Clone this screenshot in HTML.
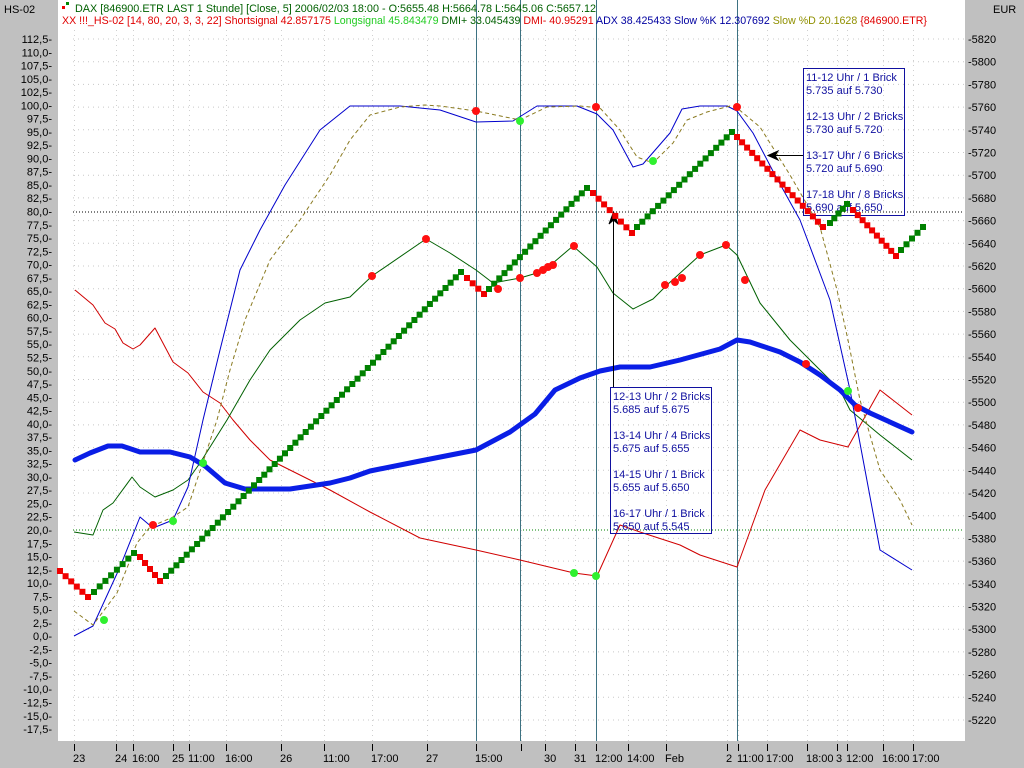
<!DOCTYPE html>
<html><head><meta charset="utf-8"><style>
html,body{margin:0;padding:0;background:#c0c0c0;}
svg{display:block;font-family:"Liberation Sans",sans-serif;}
</style></head><body>
<svg id="s" width="1024" height="768" viewBox="0 0 1024 768" xmlns="http://www.w3.org/2000/svg">
<rect x="0" y="0" width="1024" height="768" fill="#c0c0c0"/>
<rect x="58" y="0" width="907" height="741" fill="#ffffff"/>
<g id="grid"></g>
<line x1="73" y1="212" x2="964" y2="212" stroke="#000" stroke-dasharray="1,2"/>
<line x1="73" y1="530" x2="964" y2="530" stroke="#008000" stroke-dasharray="1,2"/>
<g stroke="#3d7282" stroke-width="1">
<line x1="476.5" y1="0" x2="476.5" y2="741"/><line x1="520.5" y1="0" x2="520.5" y2="741"/>
<line x1="596.5" y1="0" x2="596.5" y2="741"/><line x1="737.5" y1="0" x2="737.5" y2="741"/>
</g>
<g font-size="11" fill="#000" id="axes"></g>
<text x="4" y="13" font-size="11">HS-02</text>
<text x="993" y="13" font-size="11">EUR</text>
<rect x="62" y="6" width="3" height="3" fill="#e00"/><rect x="66" y="2" width="3" height="3" fill="#080"/>
<text x="75" y="12" font-size="11" fill="#006000" textLength="521" lengthAdjust="spacingAndGlyphs">DAX [846900.ETR LAST 1 Stunde] [Close, 5] 2006/02/03 18:00 - O:5655.48 H:5664.78 L:5645.06 C:5657.12</text>
<text y="24" font-size="11" textLength="865" lengthAdjust="spacingAndGlyphs" x="62"><tspan fill="#e00000">XX !!!_HS-02 [14, 80, 20, 3, 3, 22] Shortsignal 42.857175 </tspan><tspan fill="#22cc22">Longsignal 45.843479 </tspan><tspan fill="#006000">DMI+ 33.045439 </tspan><tspan fill="#e00000">DMI- 40.95291 </tspan><tspan fill="#0000a0">ADX 38.425433 Slow %K 12.307692 </tspan><tspan fill="#909000">Slow %D 20.1628 </tspan><tspan fill="#e00000">{846900.ETR}</tspan></text>
<g fill="none" stroke-linejoin="round">
<polyline stroke="#d00000" points="75,290 93,305 105,323 115,329 123,343 133,349 140,345 155,328 173,362 188,373 203,392 220,403 233,420 250,440 270,460 300,475 330,490 370,512 420,538 476,550 520,560 574,573 597,576 620,525 640,532 680,545 700,555 737,567 765,490 800,430 820,440 848,447 880,390 912,415"/>
<polyline stroke="#006000" points="74,532 93,535 103,510 113,503 132,477 140,487 155,497 173,490 188,480 200,463 227,420 250,380 270,350 300,320 325,303 350,297 372,276 426,239 450,253 476,270 493,283 520,278 537,273 553,263 573,246 597,267 613,293 633,309 653,299 667,285 700,255 726,245 737,255 760,303 790,340 820,370 840,390 850,410 880,435 912,460"/>
<polyline stroke="#0000cc" points="74,636 93,626 120,567 140,517 153,528 173,520 188,487 203,420 220,350 240,270 260,230 285,185 320,130 350,106 400,106 440,110 476,122 513,121 537,106 577,106 597,114 613,130 633,167 643,164 670,133 682,109 700,106 727,106 737,111 753,133 775,175 800,220 830,300 850,390 865,470 880,550 912,570"/>
<polyline stroke="#8a7a20" stroke-dasharray="4,3" points="74,611 93,625 117,593 137,543 150,527 173,517 188,507 217,420 230,370 245,320 270,260 300,220 330,175 350,140 370,115 400,107 425,105 440,106 476,111 520,120 547,107 580,106 600,108 620,130 637,157 653,163 673,143 687,120 707,112 730,106 737,108 760,127 790,175 820,227 837,290 848,340 860,400 880,470 900,500 912,525"/>
<polyline stroke="#0a1ee6" stroke-width="5" stroke-linecap="round" points="75,460 90,453 108,446 122,446 140,452 170,452 190,457 205,466 225,483 245,489 290,489 330,483 350,478 370,471 420,461 476,450 510,432 535,414 555,390 580,378 600,371 620,367 650,367 680,360 720,349 737,340 750,342 780,352 800,362 820,375 840,390 855,405 870,413 912,432"/>
</g>
<g fill="none" stroke="#1010a0">
<rect x="803.5" y="68.5" width="101" height="147"/>
<rect x="610.5" y="387.5" width="101" height="146"/>
</g>
<g stroke="#000" fill="#000">
<line x1="803" y1="155.5" x2="770" y2="155.5"/><path d="M768,155.5 L778,151 L775,155.5 L778,160 Z"/>
<line x1="613.5" y1="387" x2="613.5" y2="216"/><path d="M613.5,212 L609,224 L613.5,220 L618,224 Z"/>
</g>
<g font-size="11" fill="#1010a0">
<text x="806" y="81">11-12 Uhr / 1 Brick</text><text x="806" y="94">5.735 auf 5.730</text>
<text x="806" y="120">12-13 Uhr / 2 Bricks</text><text x="806" y="133">5.730 auf 5.720</text>
<text x="806" y="159">13-17 Uhr / 6 Bricks</text><text x="806" y="172">5.720 auf 5.690</text>
<text x="806" y="198">17-18 Uhr / 8 Bricks</text><text x="806" y="211">5.690 auf 5.650</text>
<text x="613" y="400">12-13 Uhr / 2 Bricks</text><text x="613" y="413">5.685 auf 5.675</text>
<text x="613" y="439">13-14 Uhr / 4 Bricks</text><text x="613" y="452">5.675 auf 5.655</text>
<text x="613" y="478">14-15 Uhr / 1 Brick</text><text x="613" y="491">5.655 auf 5.650</text>
<text x="613" y="517">16-17 Uhr / 1 Brick</text><text x="613" y="530">5.650 auf 5.545</text>
</g>
<g id="bricks"></g>
<g id="dots"></g>
</svg>
<script>
var NS="http://www.w3.org/2000/svg";
function el(p,t,a,txt){var e=document.createElementNS(NS,t);for(var k in a)e.setAttribute(k,a[k]);if(txt!==undefined)e.textContent=txt;document.getElementById(p).appendChild(e);return e;}
// grid
var ticks=[74,116,133,173,189,226,281,324,372,427,476,521,545,575,596,628,666,727,738,767,807,837,847,883,913];
for(var i=0;i<31;i++){var y=39+i*22.7;el("grid","line",{x1:73,y1:y,x2:964,y2:y,stroke:"#c8c8c8","stroke-dasharray":"1,4"});}
ticks.forEach(function(x){el("grid","line",{x1:x+.5,y1:30,x2:x+.5,y2:741,stroke:"#d0d0d0","stroke-dasharray":"1,4"});});
// left axis
for(var i=0;i<=52;i++){var v=112.5-i*2.5;var y=39+i*13.27;el("axes","text",{x:52,y:y+4,"text-anchor":"end"},v.toFixed(1).replace(".",",")+"-");}
for(var i=0;i<=30;i++){var v=5820-i*20;var y=39+i*22.7;el("axes","text",{x:968,y:y+4},"-"+v);}
var labs=["23","24","16:00","25","11:00","16:00","26","11:00","17:00","27","15:00","","30","31","12:00","14:00","Feb","2","11:00","17:00","18:00","3","12:00","16:00","17:00"];
ticks.forEach(function(x,i){el("axes","line",{x1:x+.5,y1:744,x2:x+.5,y2:751,stroke:"#000"});if(labs[i])el("axes","text",{x:x-1,y:762},labs[i]);});
// bricks
var segs=[["r",60,571,88,597],["g",94,592,134,553],["r",140,557,160,581],["g",166,576,461,272],["r",467,278,484,294],["g",489,289,587,188],["r",593,193,632,233],["g",637,227,732,132],["r",737,137,823,227],["g",830,223,847,204],["r",853,210,896,256],["g",901,250,923,227]];
segs.forEach(function(s){var n=Math.round(Math.abs(s[4]-s[2])/5.35);for(var k=0;k<=n;k++){var x=s[1]+(s[3]-s[1])*k/(n||1),y=s[2]+(s[4]-s[2])*k/(n||1);el("bricks","rect",{x:(x-3).toFixed(1),y:(y-3).toFixed(1),width:6,height:6,fill:s[0]=="r"?"#f00000":"#008000"});}});
var rd=[[153,525],[372,276],[426,239],[476,111],[596,107],[737,107],[498,289],[520,278],[537,273],[543,270],[548,267],[553,265],[574,246],[665,285],[675,282],[682,278],[700,255],[726,245],[745,280],[806,364],[858,408]];
var gd=[[104,620],[173,521],[203,463],[520,121],[653,161],[574,573],[596,576],[848,391]];
rd.forEach(function(p){el("dots","circle",{cx:p[0],cy:p[1],r:4,fill:"#ff1010"});});
gd.forEach(function(p){el("dots","circle",{cx:p[0],cy:p[1],r:4,fill:"#30f030"});});
</script>
</body></html>
